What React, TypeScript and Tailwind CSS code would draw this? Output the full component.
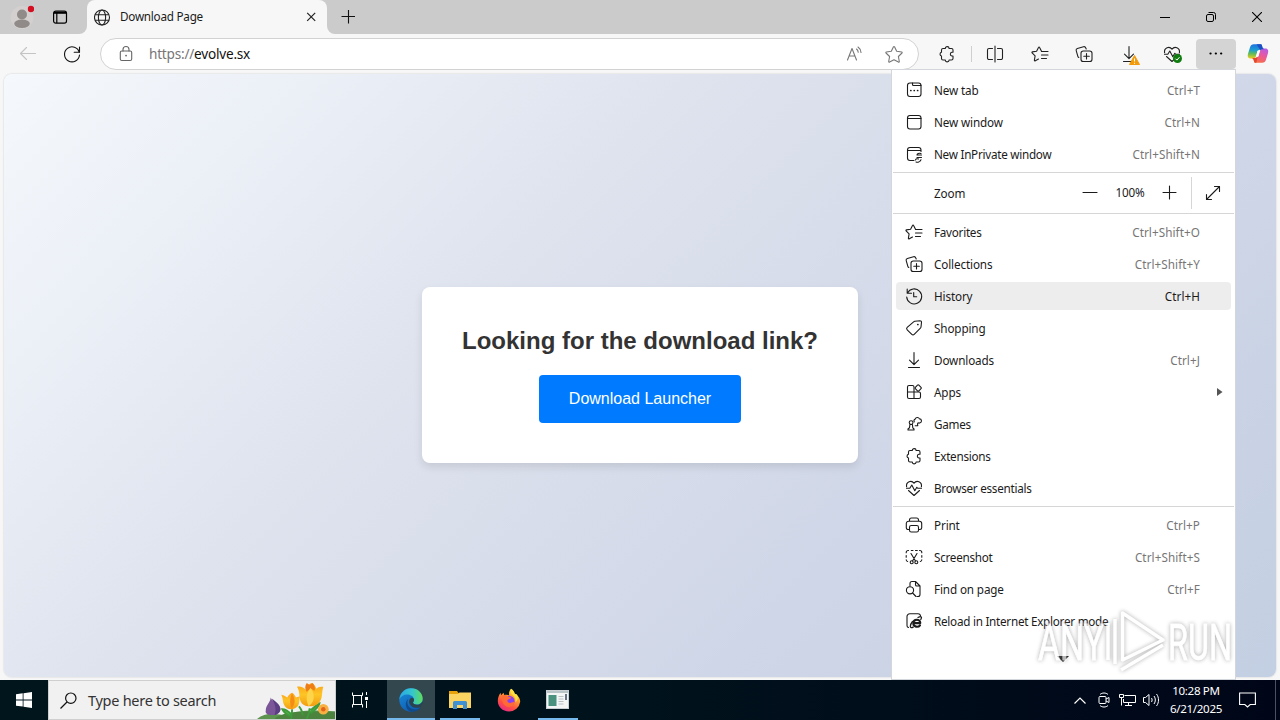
import type { ReactNode } from "react";

type MenuItem = {
  icon: ReactNode;
  label: string;
  tight?: boolean;
  shortcut?: string;
  active?: boolean;
  submenu?: boolean;
};

function Icon({ size = 20, className = "", children }: { size?: number; className?: string; children: ReactNode }) {
  return (
    <svg
      width={size}
      height={size}
      viewBox="0 0 20 20"
      fill="none"
      stroke="currentColor"
      strokeWidth="1.1"
      strokeLinecap="round"
      strokeLinejoin="round"
      className={`shrink-0 ${className}`}
    >
      {children}
    </svg>
  );
}

// --- Icon shapes, all on a 20px grid ---
const newTab = (
  <>
    <rect x="3.5" y="3" width="13.5" height="13.5" rx="2.5" />
    <path d="M8.5 3v1.500a1 1 0 0 0 1 1H17" />
    <path d="M6.800 10.500h.1M10.200 10.500h.1M13.600 10.500h.1" strokeWidth="1.700" />
  </>
);
const newWindow = (
  <>
    <rect x="3.5" y="3.5" width="13.5" height="13.5" rx="2.5" />
    <path d="M3.5 6.5H17" />
  </>
);
const inPrivate = (
  <>
    <path d="M10 16.500H6A2.500 2.500 0 0 1 3.500 14V6A2.500 2.500 0 0 1 6 3.500h8.500A2.500 2.500 0 0 1 17 6v1.500M3.500 6.500H17" />
    <path d="M17 9.500c-2-.8-4 .2-4 1.500h4.500M13 13.500h4.500M11.500 16c.5-1.500 2-1.500 3-1M12 18c1.500.6 4 .3 5-2.200" />
  </>
);
const favorites = (
  <>
    <path d="M11.500 7.300 9.600 3.500a.6.6 0 0 0-1.100 0L6.600 7.300l-4.200.6a.6.6 0 0 0-.3 1l3 3-.7 4.200a.6.6 0 0 0 .9.700L8.500 15" />
    <path d="M11.500 7.500h6.500M11.500 11h6.500M11.500 14.500h5" />
  </>
);
const collections = (
  <>
    <rect x="7" y="7" width="11" height="10.500" rx="2.300" />
    <path d="M12.500 9.500v5.500M9.800 12.300h5.500" />
    <path d="M4.800 13.500 4 12.800 2.200 6.700A1.800 1.800 0 0 1 3.400 4.500L9.500 2.700a1.800 1.800 0 0 1 2.200 1.100l.5 1.200" />
  </>
);
const history = (
  <>
    <path d="M3.200 3v4.200h4.300M3.500 7A7.500 7.500 0 1 1 2.700 11" />
    <path d="M9.700 6.500v4.300h3" />
  </>
);
const shopping = (
  <>
    <path d="M10.800 3.300 16 2.700a1.500 1.500 0 0 1 1.500 1.600L17 9a2 2 0 0 1-.6 1.200l-6.200 6.200a1.700 1.700 0 0 1-2.400 0l-4.600-4.600a1.700 1.700 0 0 1 0-2.400l6.400-5.500a2 2 0 0 1 1.200-.6Z" />
    <path d="M13.800 6.500h.1" strokeWidth="1.700" />
  </>
);
const download = <path d="M10 2.500v12M5.500 10.200l4.500 4.500 4.500-4.500M4.500 17.500h11" />;
const apps = (
  <>
    <path d="M10 16.500V5a1.500 1.500 0 0 0-1.500-1.500H5A1.500 1.500 0 0 0 3.500 5v10A1.500 1.500 0 0 0 5 16.500h10a1.500 1.500 0 0 0 1.500-1.500v-3.500a1.500 1.500 0 0 0-1.500-1.500H3.500" />
    <rect x="11.700" y="3.500" width="5" height="5" rx="1" transform="rotate(45 14.200 6)" />
  </>
);
const games = (
  <>
    <path d="M4 16h6v-1l-1.200-1.200-.4-3.300H5.900l-.4 3.300L4 15Z" />
    <circle cx="7.100" cy="8.600" r="1.900" />
    <path d="M10.300 7.800a1.700 1.700 0 0 1 .9-2.700 2.300 2.300 0 0 1 4.300-.2 2 2 0 0 1 .6 3.900c-.8.500-1.600.3-2 0l-.6 1.200.3 1.700h-2.600" />
  </>
);
const extensions = (
  <path d="M6 4.500h2.300a1.900 1.900 0 0 1 3.800 0h2.400A1.500 1.500 0 0 1 16 6v2.300h-1.200a1.900 1.900 0 0 0 0 3.700H16v2.500a1.500 1.500 0 0 1-1.500 1.500h-2.400a1.900 1.900 0 0 1-3.800 0H6a1.500 1.500 0 0 1-1.500-1.500V12a1.900 1.900 0 0 1 0-3.700V6A1.500 1.500 0 0 1 6 4.500Z" />
);
const essentials = (
  <>
    <path d="M2.600 8.800c-.9-5.300 5-7 7.400-3.600 2.400-3.400 8.300-1.700 7.400 3.600M4.500 12.500l5.500 5 5.500-5" />
    <path d="M2.500 10.300h3.300L7.800 7l3 5.800 2-3.500 1 1h3.700" />
  </>
);
const print = (
  <>
    <path d="M5.500 6.200V5A2 2 0 0 1 7.500 3h5a2 2 0 0 1 2 2v1.200M5.500 14.500H4A1.700 1.700 0 0 1 2.300 12.800V8.500a2.300 2.300 0 0 1 2.300-2.300h10.800a2.300 2.300 0 0 1 2.300 2.300v4.300a1.700 1.700 0 0 1-1.700 1.700h-1.500" />
    <rect x="5.500" y="10.500" width="9" height="6.500" rx="1.800" />
  </>
);
const screenshot = (
  <>
    <path d="M4.500 3.500h-.3a2 2 0 0 0-2 2v.3M7.300 3.500H9M11.500 3.500h1.800M15.500 3.500h.3a2 2 0 0 1 2 2v.3M2.200 8.500v1.800M17.800 8.500v1.800M2.200 12.800v.2a2 2 0 0 0 1.500 1.500M17.800 12.800v.2a2 2 0 0 1-1.500 1.500" />
    <path d="m7 6.500 4.500 7.500M13 6.500 8.500 14" />
    <circle cx="7.700" cy="15.300" r="1.500" />
    <circle cx="12.300" cy="15.300" r="1.500" />
  </>
);
const findOnPage = (
  <>
    <path d="M6 7V4.500a2 2 0 0 1 2-2h3.500L16 7v8.500a2 2 0 0 1-2 2h-1M11.500 2.500v3.200A1.300 1.300 0 0 0 12.800 7H16" />
    <circle cx="6" cy="11.300" r="3.600" />
    <path d="m8.600 14 3.400 3.500" />
  </>
);
const ieMode = (
  <>
    <path d="M4.500 16.500a2 2 0 0 1-1.500-2V5.500A2.800 2.800 0 0 1 5.800 2.700h8.400A2.600 2.600 0 0 1 16.500 4.500" />
    <path d="M16 14.300c-1.700 2.300-6.700 1.900-6.700-2 0-4.700 7-4.700 7-.2H10" strokeWidth="2.100" />
    <path d="M14 6.500c3.500-1.800 4.200-.3 2.800 2M8.500 10.500c-3 3.700-3 7.500.7 5.700" strokeWidth="1.300" />
  </>
);
const splitScreen = (
  <path d="M10 2v16M7.500 4.500H4A1.500 1.500 0 0 0 2.500 6v8A1.500 1.500 0 0 0 4 15.500h3.500M12.500 4.500H16A1.500 1.500 0 0 1 17.500 6v8a1.500 1.500 0 0 1-1.500 1.500h-3.500" />
);

const topItems: MenuItem[] = [
  { icon: newTab, label: "New tab", shortcut: "Ctrl+T" },
  { icon: newWindow, label: "New window", shortcut: "Ctrl+N" },
  { icon: inPrivate, label: "New InPrivate window", shortcut: "Ctrl+Shift+N", tight: true },
];

const mainItems: MenuItem[] = [
  { icon: favorites, label: "Favorites", shortcut: "Ctrl+Shift+O", tight: true },
  { icon: collections, label: "Collections", shortcut: "Ctrl+Shift+Y" },
  { icon: history, label: "History", shortcut: "Ctrl+H", active: true },
  { icon: shopping, label: "Shopping" },
  { icon: download, label: "Downloads", shortcut: "Ctrl+J" },
  { icon: apps, label: "Apps", submenu: true },
  { icon: games, label: "Games", tight: true },
  { icon: extensions, label: "Extensions", tight: true },
  { icon: essentials, label: "Browser essentials", tight: true },
];

const pageItems: MenuItem[] = [
  { icon: print, label: "Print", shortcut: "Ctrl+P" },
  { icon: screenshot, label: "Screenshot", shortcut: "Ctrl+Shift+S", tight: true },
  { icon: findOnPage, label: "Find on page", shortcut: "Ctrl+F" },
  { icon: ieMode, label: "Reload in Internet Explorer mode", tight: true },
];

function MenuRow({ item }: { item: MenuItem }) {
  return (
    <div className="flex h-8 items-center px-1">
      <div className={`flex h-7 flex-1 items-center rounded pl-2 ${item.active ? "bg-[#ededed]" : ""}`}>
        <Icon>{item.icon}</Icon>
        <span className={`ml-2.5 flex-1 pt-px whitespace-nowrap ${item.tight ? "tracking-[-0.26px]" : ""}`}>
          {item.label}
        </span>
        {item.shortcut && (
          <span className={`mr-[31px] pt-px tracking-[0.08px] ${item.active ? "text-[#1b1b1b]" : "text-[#767676]"}`}>
            {item.shortcut}
          </span>
        )}
        {item.submenu && (
          <svg width="6" height="8" viewBox="0 0 6 8" className="mr-2 shrink-0">
            <path d="M0 0l5.500 4L0 8z" fill="#555" />
          </svg>
        )}
      </div>
    </div>
  );
}

function BrowserMenu() {
  return (
    <div className="absolute top-[69px] left-[891px] flex h-[611px] w-[345px] flex-col border border-[#d3d7dc] bg-white pt-1 text-[11.7px] tracking-[-0.13px] text-[#1b1b1b]">
      {topItems.map((item) => (
        <MenuRow key={item.label} item={item} />
      ))}
      <div className="mx-px mt-0.5 h-px bg-[#d6d6d6]" />
      <div className="flex h-10 items-center">
        <span className="flex-1 pl-[42px] pt-px">Zoom</span>
        <Icon>
          <path d="M3 9.500h14" />
        </Icon>
        <span className="w-[60px] text-center">100%</span>
        <Icon>
          <path d="M3 9.500h13M9.500 3v13" />
        </Icon>
        <div className="ml-[11px] h-8 w-px bg-[#d6d6d6]" />
        <Icon className="mr-3 ml-[11px]">
          <path d="M3.500 16.500l13-13M11.500 3.500h5v5M3.500 11.500v5h5" />
        </Icon>
      </div>
      <div className="mx-px mb-0.5 h-px bg-[#d6d6d6]" />
      {mainItems.map((item) => (
        <MenuRow key={item.label} item={item} />
      ))}
      <div className="mx-px my-0.5 h-px bg-[#d6d6d6]" />
      {pageItems.map((item) => (
        <MenuRow key={item.label} item={item} />
      ))}
      <svg width="12" height="6" viewBox="0 0 12 6" className="mt-[19px] mr-px self-center">
        <path d="M0 0h12L6 6z" fill="#111" />
      </svg>
    </div>
  );
}

function TabStrip() {
  return (
    <div className="flex h-[34px] bg-[#f7f7f7]">
      <div className="flex w-[87px] items-center rounded-br-lg bg-[#cbcbcb]">
        <svg width="24" height="24" viewBox="0 0 24 24" className="ml-[10px]">
          <circle cx="12" cy="12.500" r="11.500" fill="#d3d0cf" />
          <circle cx="12" cy="9.500" r="5" fill="#908b88" />
          <ellipse cx="12" cy="18.700" rx="7.800" ry="4.200" fill="#908b88" />
          <circle cx="21" cy="4" r="3.200" fill="#d40f22" />
        </svg>
        <svg width="16" height="16" viewBox="0 0 16 16" fill="none" stroke="#000" className="ml-[18px]">
          <rect x="1.600" y="2" width="12.900" height="12.200" rx="2.200" strokeWidth="1.200" />
          <path d="M2 3.600h12" strokeWidth="2.400" />
          <path d="M4.800 4v10" strokeWidth="1.200" />
        </svg>
      </div>
      <div className="w-60 bg-[#cbcbcb]">
        <div className="flex h-full items-center rounded-t-lg bg-[#f7f7f7] pl-[7px]">
          <svg width="17" height="17" viewBox="0 0 17 17" fill="none" stroke="#222" strokeWidth="1.100">
            <circle cx="8" cy="8.500" r="7.500" />
            <ellipse cx="8" cy="8.500" rx="3.600" ry="7.500" />
            <path d="M1 5.800h14M1 11.200h14" />
          </svg>
          <span className="ml-[9px] flex-1 text-[11.7px] tracking-[-0.240px] text-[#1b1b1b]">Download Page</span>
          <svg width="10" height="10" viewBox="0 0 10 10" stroke="#222" strokeWidth="1.200" className="mr-[11px]">
            <path d="M1.200.8l8 8M9.200.8l-8 8" />
          </svg>
        </div>
      </div>
      <div className="flex flex-1 items-center rounded-bl-lg bg-[#cbcbcb] pl-[14px]">
        <svg width="14" height="14" viewBox="0 0 14 14" stroke="#111" strokeWidth="1.100">
          <path d="M.5 6.500h14M7.500 0v13.500" />
        </svg>
        <div className="ml-auto flex items-center">
          <svg width="10" height="10" viewBox="0 0 10 10" stroke="#000" className="mr-9">
            <path d="M0 5.500h10" />
          </svg>
          <svg width="10" height="10" viewBox="0 0 10 10" fill="none" stroke="#000" className="mr-9">
            <rect x=".5" y="2.500" width="7" height="7" rx="1.500" />
            <path d="M2.500.5h5a2 2 0 0 1 2 2v5" />
          </svg>
          <svg width="10" height="10" viewBox="0 0 10 10" stroke="#000" strokeWidth="1.100" className="mr-[18px]">
            <path d="M0 0l10 10M10 0L0 10" />
          </svg>
        </div>
      </div>
    </div>
  );
}

function Copilot() {
  return (
    <svg width="22" height="21" viewBox="0 0 24 22" fill="none">
      <defs>
        <linearGradient id="cp1" x1="0.300" y1="0" x2="0.200" y2="1">
          <stop offset="0" stopColor="#1f72e0" />
          <stop offset="0.400" stopColor="#1b9fd0" />
          <stop offset="0.650" stopColor="#5fbb5c" />
          <stop offset="1" stopColor="#f0cf1b" />
        </linearGradient>
        <linearGradient id="cp2" x1="0.800" y1="0" x2="0.300" y2="1">
          <stop offset="0" stopColor="#b45ce6" />
          <stop offset="0.450" stopColor="#e9589f" />
          <stop offset="1" stopColor="#f9703c" />
        </linearGradient>
      </defs>
      <path d="M16 1.500 17 4.800A2.500 2.500 0 0 0 19.300 6.300H15L11.500 8 9.700 14.200A3.500 3.500 0 0 1 6.400 16.500H4C.8 16.500.4 13.700 1.200 11L3.300 4.300A4.500 4.500 0 0 1 7.500 1h7.800Z" fill="url(#cp1)" />
      <path d="M8 20.500 7 17.200A2.500 2.500 0 0 0 4.800 15.800H9L12.500 14l1.800-6.200A3.500 3.500 0 0 1 17.600 5.500H20c3.200 0 3.600 2.800 2.800 5.500l-2.100 6.700A4.500 4.500 0 0 1 16.500 21H8.700Z" fill="url(#cp2)" />
      <path d="M10.500 1h4.800l.7.500 1 3.300a2.500 2.500 0 0 0 2.300 1.500h-2a3 3 0 0 0-2.800 1.200Z" fill="#1d4fc4" />
      <path d="M4.800 15.800H9a4 4 0 0 0 2.500-1L10.200 21H8.700L8 20.500 7 17.200A2.500 2.500 0 0 0 4.800 15.800Z" fill="#e5482d" />
      <path d="m11.700 8 2.400-.2-1.900 6.400-2.400.2Z" fill="#fff" />
    </svg>
  );
}

function Toolbar() {
  return (
    <div className="flex h-[39px] items-center bg-[#f7f7f7] text-[#222]">
      <Icon className="ml-[18px] text-[#c4c4c4]">
        <path d="M17.500 9.500h-15M8.500 3.500l-6 6 6 6" />
      </Icon>
      <Icon className="ml-6 text-[#111]">
        <path d="M17.300 8.500A7.500 7.500 0 1 0 17.500 11M17.500 3v5.300h-5.300" />
      </Icon>
      <div className="ml-[18px] flex h-8 w-[819px] items-center rounded-full border border-[#d2d2d2] bg-white pl-[15px] text-[#666]">
        <Icon>
          <rect x="4.300" y="7" width="11.400" height="9.500" rx="1.500" />
          <path d="M7 7V5.500a3 3 0 0 1 6 0V7" />
          <path d="M10 11.600h.1" strokeWidth="1.700" />
        </Icon>
        <span className="ml-[13px] flex-1 pt-0.5 text-[13.600px] tracking-[-0.220px] text-[#767676]">
          https://<span className="text-[#111]">evolve.sx</span>
        </span>
        <Icon className="mr-5 text-[#777]">
          <path d="M3.500 16 8 4.500l4.500 11.500M5 12h6M12.500 5c1 .8 1.600 2 1.700 3.200M14 3c1.800 1.300 2.900 3.100 3 5.400" />
        </Icon>
        <Icon className="mr-[14px] text-[#777]">
          <path d="M9.500 2.700a.6.6 0 0 1 1 0l2.200 4.600 5 .7a.6.6 0 0 1 .3 1l-3.600 3.500.9 5a.6.6 0 0 1-.9.600L10 15.700l-4.400 2.400a.6.6 0 0 1-.9-.6l.9-5L2 9a.6.6 0 0 1 .3-1l5-.7Z" />
        </Icon>
      </div>
      <div className="flex w-[52px] justify-center pl-1">
        <Icon>{extensions}</Icon>
      </div>
      <div className="h-4 w-px bg-[#cfcfcf]" />
      <div className="flex w-[46px] justify-center">
        <Icon>{splitScreen}</Icon>
      </div>
      <div className="flex w-11 justify-center">
        <Icon>{favorites}</Icon>
      </div>
      <div className="flex w-11 justify-center">
        <Icon>{collections}</Icon>
      </div>
      <div className="flex w-11 justify-center pl-px">
        <div className="relative">
          <Icon>{download}</Icon>
          <svg width="11" height="10" viewBox="0 0 11 10" className="absolute top-[11px] left-[10px]">
            <path d="M5.500 0.500 10.500 9.500H.5Z" fill="#f29b0c" stroke="#f29b0c" strokeLinejoin="round" />
            <path d="M5.500 3.500v3M5.500 7.800v1" stroke="#fff" strokeWidth="1" />
          </svg>
        </div>
      </div>
      <div className="flex w-11 justify-center">
        <div className="relative">
          <Icon>{essentials}</Icon>
          <svg width="9" height="9" viewBox="0 0 9 9" className="absolute top-[10px] left-[11px]">
            <circle cx="4.500" cy="4.500" r="4.500" fill="#107c10" />
            <path d="m2.500 4.700 1.400 1.400 2.600-2.900" stroke="#fff" fill="none" />
          </svg>
        </div>
      </div>
      <div className="mt-px ml-0.5 flex h-[30px] w-10 items-center justify-center rounded bg-[#d4d4d4]">
        <Icon className="text-black">
          <path d="M4.500 9.500h.1M9.800 9.500h.1M15.100 9.500h.1" strokeWidth="2.200" />
        </Icon>
      </div>
      <div className="ml-[11px]">
        <Copilot />
      </div>
    </div>
  );
}

function Flowers() {
  return (
    <svg width="78" height="37" viewBox="0 0 80 38" preserveAspectRatio="none" className="mt-0.5 self-end">
      <defs>
        <linearGradient id="petal" x1="0" y1="0" x2="0" y2="1">
          <stop offset="0" stopColor="#f9a11b" />
          <stop offset="0.500" stopColor="#fdc526" />
          <stop offset="1" stopColor="#f39c12" />
        </linearGradient>
      </defs>
      <path d="M0 38c8-7 18-6 26-4 12-4 28-6 54-4v8Z" fill="#5d9550" />
      <path d="M20 36c14-7 34-6 60-5v7H18Z" fill="#4c843f" />
      <path d="M54 27c0 4-1 7-3 11M55 29c4-3 6-6 9-7-1 5-5 7-9 10M36 28c0 4-1 7-1 10M35 33c-3-3-5-5-9-5 2 4 5 6 9 7M47 34c-1-5-2-7-4-9" stroke="#3e9a3a" strokeWidth="2" fill="#55b04b" />
      <path d="M14 16c1 4 10 7 10 12 0 4-4 6-8 6s-8-1-7-5c0-5 5-8 5-13Z" fill="#7a5698" />
      <path d="M15 17c4 3 9 6 9 11 0 3-3 5-6 6 2-6 1-11-3-17Z" fill="#5b3d83" />
      <path d="M25 13c4 1 6 3 6 3s2-4 5-5c3 2 4 5 4 5s2-1 4-1c-1 5 0 10-5 12-4 2-9 1-11-3-2-3-1-7-3-11Z" fill="url(#petal)" />
      <path d="M36 12c-3 5-2 11-1 15 4-3 5-9 1-15Z" fill="#f58b14" />
      <path d="M41 5c4-1 7 1 9 3 1-4 3-6 6-7 3 1 4 4 5 6 2-2 4-2 7-2-2 6 0 12-5 17-5 4-13 4-17 0-4-5-1-11-5-17Z" fill="url(#petal)" />
      <path d="M51 1c-2 3-2 6 0 9l4-3 4 2c1-3 0-6-2-8l-3 2Z" fill="#ee7d16" />
      <path d="M55 6c-5 6-5 13-2 19 6-4 7-12 2-19Z" fill="#fdd44a" />
      <circle cx="68" cy="28" r="5.500" fill="#f8b042" />
      <circle cx="68" cy="28" r="2.300" fill="#e2631c" />
    </svg>
  );
}

function EdgeLogo() {
  return (
    <svg width="24" height="24" viewBox="0 0 24 24">
      <defs>
        <linearGradient id="edgeTop" x1="0" y1="0.500" x2="1" y2="0.500">
          <stop offset="0" stopColor="#2aa7e4" />
          <stop offset="0.550" stopColor="#35c6cf" />
          <stop offset="1" stopColor="#5fdc5a" />
        </linearGradient>
        <linearGradient id="edgeBody" x1="0" y1="0" x2="0.600" y2="1">
          <stop offset="0" stopColor="#1a8fdc" />
          <stop offset="1" stopColor="#0e5bb0" />
        </linearGradient>
      </defs>
      <circle cx="12" cy="12" r="11.700" fill="url(#edgeBody)" />
      <path d="M.4 11.500C1 5 6 .3 12 .3c7 0 11.700 5 11.700 10.200 0 4-3 6-6 6-2.800 0-4-1.200-3.700-2 .3-.7 1-1.100 1-2.800C15 8.800 12 6.500 8 6.500 4.500 6.500 1.500 8.500.4 11.500Z" fill="url(#edgeTop)" />
      <path d="M9.200 11c-2.500 5 1 10.500 7 10.500 2.500 0 4-.8 5.600-2A11.700 11.700 0 0 1 12 23.700C6 22 5.500 13.500 9.200 11Z" fill="#114a8b" />
      <path d="M14.200 14c-.5 1.500.8 2.800 3.600 2.800 2.300 0 4.300-1 5.300-2.600.5-.3 1.200 0 .9.800l-2 3.700c-5 2.800-11.500.3-12-5 0-2 1.500-4 3-4 2 .2 2.800 2.500 1.200 4.300Z" fill="#2c434d" />
    </svg>
  );
}

function FirefoxLogo() {
  return (
    <svg width="24" height="24" viewBox="0 0 24 24">
      <defs>
        <linearGradient id="ff" x1="0.800" y1="0" x2="0.250" y2="1">
          <stop offset="0" stopColor="#fff04f" />
          <stop offset="0.350" stopColor="#ffa22f" />
          <stop offset="0.700" stopColor="#ff4f42" />
          <stop offset="1" stopColor="#e8288b" />
        </linearGradient>
      </defs>
      <path d="M14 .8c2 1.200 3.200 3 3.700 5 2.700 1 5.500 4 5.500 8A11.200 11.200 0 0 1 12 23.500C5.500 23.500.8 18.800.8 12.800c0-3 1.200-5.700 2.700-8l.6 2.400L6.500 4.800l.8 2.200c2-.7 4-.3 5 .5C11.500 5 12.500 2.500 14 .8Z" fill="url(#ff)" />
      <path d="M14 .8c-1 2.700 0 4.800 2 6.500 2 2 3 4 2.500 7 2.500-2 3-5.500 1.500-7.500-.7-.7-1.500-.8-2.300-1C17.200 3.800 16 2 14 .8Z" fill="#ffdf3f" />
      <circle cx="12.300" cy="13" r="5.300" fill="#8a3ff0" />
      <path d="M5 8c2-1.800 5-1 6.500.8 1.500.4 2.500.5 2.500 1-.3 1.200-2.500 1.200-3.500 2.200-.5 1.500.5 3 2.500 3 1.800 0 2.500-1.200 4-.8.5 2.300-2 4.800-5 4.800C7 19 4 13 5 8Z" fill="#ff6a35" />
    </svg>
  );
}

function Taskbar() {
  return (
    <div className="flex h-10 bg-linear-to-r from-[#00151c] via-[#00121c] to-[#000618] text-white">
      <div className="flex w-12 items-center justify-center">
        <svg width="16" height="16" viewBox="0 0 16 16" fill="#fff">
          <path d="M0 2.200 6.700 1.300v6.200H0ZM7.500 1.200 16 0v7.500H7.500ZM0 8.400h6.700v6.200L0 13.700ZM7.500 8.400H16V16l-8.500-1.200Z" />
        </svg>
      </div>
      <div className="flex w-72 items-center border border-[#cfcfcf] bg-[#f1f1f1] pl-[11px] text-[#333]">
        <svg width="17" height="17" viewBox="0 0 17 17" fill="none" stroke="#111" strokeWidth="1.200">
          <circle cx="10.800" cy="6.200" r="5.200" />
          <path d="m7 10-6.500 6.500" />
        </svg>
        <span className="ml-[11px] flex-1 pt-px text-[14.500px] tracking-[-0.280px] whitespace-nowrap">Type here to search</span>
        <Flowers />
      </div>
      <div className="flex w-[51px] items-center pl-[15px]">
        <svg width="18" height="16" viewBox="0 0 18 16" fill="none" stroke="#fff">
          <path d="M1.500.5v3h10v-3M1.500 15.500v-3h10v3M2.500 3.500v9M10.500 3.500v9M15.500 0v3M15.500 9v7" />
          <path d="M14 6.500h3" strokeWidth="3" />
        </svg>
      </div>
      <div className="flex w-12 items-center justify-center border-b-2 border-[#76b9ed] bg-[#33474f] pt-0.5">
        <EdgeLogo />
      </div>
      <div className="ml-[5px] flex w-10 items-center justify-center border-b-2 border-[#76b9ed] pt-0.5">
        <svg width="22" height="18" viewBox="0 0 22 18">
          <path d="M0 0h8l1.500 2H20v3H0Z" fill="#e8a30c" />
          <path d="M0 3h9l1.500-1.500H22V17H0Z" fill="#fbd462" />
          <path d="M4 18v-6.500A1.500 1.500 0 0 1 5.500 10h11a1.500 1.500 0 0 1 1.500 1.500V18h-4v-4H8v4Z" fill="#3f91d2" />
        </svg>
      </div>
      <div className="flex w-[58px] items-center justify-center">
        <FirefoxLogo />
      </div>
      <div className="flex w-10 items-center border-b-2 border-[#76b9ed] pl-2">
        <svg width="23" height="19" viewBox="0 0 23 19">
          <rect x=".5" y=".5" width="22" height="18" fill="#f4f6f6" stroke="#c9cfd2" />
          <path d="M1 2h21" stroke="#b9c4c8" strokeWidth="2" />
          <rect x="2.500" y="5" width="8" height="11" fill="#4b9180" />
          <path d="M12.500 6.500h5M12.500 9h5M12.500 11.500h5M12.500 14h5" stroke="#b8c0c3" />
          <path d="M20 4v6" stroke="#384a66" strokeWidth="1.500" />
        </svg>
      </div>
      <div className="ml-auto flex items-center">
        <svg width="12" height="7" viewBox="0 0 12 7" fill="none" stroke="#fff" strokeWidth="1.200" className="mr-3">
          <path d="m.5 6.500 5.500-5.500 5.500 5.500" />
        </svg>
        <svg width="12" height="16" viewBox="0 0 12 16" fill="none" stroke="#fff" className="mr-[9px]">
          <rect x="1" y="4.500" width="7" height="7" rx="1" />
          <path d="m8 7 3-1.500v5L8 9M2 2.500c2-2 6-2 8 0M2 13.500c2 2 6 2 8 0" />
        </svg>
        <svg width="17" height="14" viewBox="0 0 17 14" fill="none" stroke="#fff" className="mr-[7px]">
          <path d="M5.500 2.500h11v7h-12V6M9.500 9.500v3M6 12.500h7M.5 1.500h4v3h-4ZM2.500 4.500v8" />
        </svg>
        <svg width="17" height="14" viewBox="0 0 17 14" fill="none" stroke="#fff" className="mr-[9px]">
          <path d="M.5 4.500h2l3.500-3v11l-3.500-3h-2ZM8.500 5c.8 1.200.8 2.800 0 4M11 3c1.800 2.400 1.800 5.600 0 8M13.500 1c2.700 3.500 2.700 8.500 0 12" />
        </svg>
        <div className="flex w-[54px] flex-col items-center text-[11.600px] leading-[18px] tracking-[-0.350px] whitespace-nowrap">
          <span>10:28 PM</span>
          <span>6/21/2025</span>
        </div>
        <svg width="17" height="16" viewBox="0 0 17 16" fill="none" stroke="#fff" strokeWidth="1.100" className="ml-4">
          <path d="M.6 1h15.800v11.500h-5.200L8.500 15l-2.700-2.500H.6Z" />
        </svg>
        <div className="ml-[19px] h-10 w-px bg-[#4a5160]" />
        <div className="w-1" />
      </div>
    </div>
  );
}

function Watermark() {
  return (
    <svg
      width="240"
      height="74"
      viewBox="0 0 240 74"
      className="absolute top-[604px] left-[1032px] overflow-visible opacity-70 [filter:drop-shadow(0_0_2px_#8a8a8a)]"
      fill="#fff"
    >
      <g fontFamily="Roboto, sans-serif" fontSize="50" stroke="#fff" strokeWidth="0.800">
        <text x="6" y="56" textLength="66" lengthAdjust="spacingAndGlyphs">
          ANY
        </text>
        <text x="136" y="56" textLength="64" lengthAdjust="spacingAndGlyphs">
          RUN
        </text>
      </g>
      <g fill="none" stroke="#fff" strokeWidth="3.500" strokeLinejoin="round">
        <path d="M76 19v37" />
        <path d="M83 15v45" />
        <path d="M90.500 9v47L131 36Z" />
        <path d="m89 66 42-25" />
      </g>
    </svg>
  );
}

export default function App() {
  return (
    <div className="relative flex h-[720px] w-[1280px] flex-col overflow-hidden bg-[#f7f7f7] font-['Noto_Sans',sans-serif]">
      <TabStrip />
      <Toolbar />

      {/* --- Page content --- */}
      <div className="flex flex-1 px-1 pt-px pb-[3px]">
        <div className="flex flex-1 items-center justify-center rounded-lg bg-[linear-gradient(135deg,#f5f9fd,#dfe3ee_37%,#cfd6e7_70%,#c3cfe2)] pb-0.5 font-['Liberation_Sans',Arial,sans-serif] shadow-[0_0_2px_rgba(0,0,0,0.2)]">
          <div className="flex h-44 w-[436px] flex-col items-center rounded-lg bg-white pt-10 shadow-[0_4px_8px_rgba(0,0,0,0.1)]">
            <h1 className="text-2xl leading-7 font-bold whitespace-nowrap text-[#333]">Looking for the download link?</h1>
            <button className="mt-5 h-12 w-[202px] rounded bg-[#007bff] text-base text-white">Download Launcher</button>
          </div>
        </div>
      </div>

      <Taskbar />
      <BrowserMenu />
      <Watermark />
    </div>
  );
}
